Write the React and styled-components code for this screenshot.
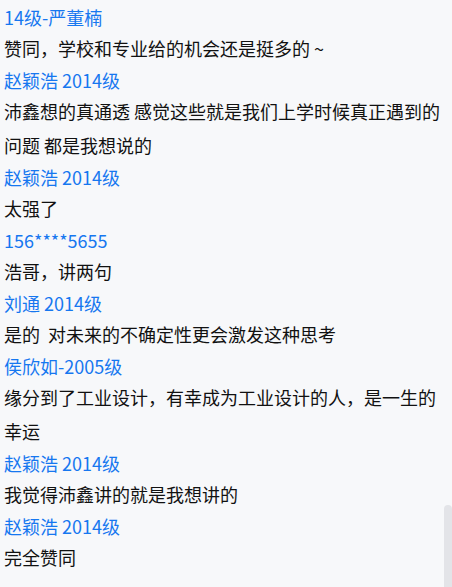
import React from 'react';
import styled, { createGlobalStyle } from 'styled-components';

const GlobalStyle = createGlobalStyle`
  html, body {
    margin: 0;
    padding: 0;
    background: #f7f8fa;
    overflow: hidden;
  }
`;

const Page = styled.div`
  position: relative;
  width: 452px;
  height: 587px;
  overflow: hidden;
  background: #f7f8fa;
  font-family: "Microsoft YaHei", "Noto Sans CJK SC", sans-serif;
`;

const List = styled.ul`
  list-style: none;
  margin: 0;
  padding: 3px 4px 0 4px;
`;

const Comment = styled.li`
  display: flex;
  flex-direction: column;
`;

const Author = styled.div`
  font-size: 18px;
  line-height: 28px;
  color: #1677f0;
`;

const Text = styled.div`
  font-size: 18px;
  line-height: 34px;
  color: #111;
  padding-bottom: 1px;
  white-space: pre-wrap;
`;

const ScrollThumb = styled.div`
  position: absolute;
  right: 0;
  top: 505px;
  width: 8px;
  height: 90px;
  border-radius: 4px 4px 0 0;
  background: #e3e4e8;
`;

const comments = [
  { author: '14级-严董楠', text: '赞同，学校和专业给的机会还是挺多的 ~' },
  { author: '赵颖浩 2014级', text: '沛鑫想的真通透 感觉这些就是我们上学时候真正遇到的问题 都是我想说的' },
  { author: '赵颖浩 2014级', text: '太强了' },
  { author: '156****5655', text: '浩哥，讲两句' },
  { author: '刘通 2014级', text: '是的  对未来的不确定性更会激发这种思考' },
  { author: '侯欣如-2005级', text: '缘分到了工业设计，有幸成为工业设计的人，是一生的幸运' },
  { author: '赵颖浩 2014级', text: '我觉得沛鑫讲的就是我想讲的' },
  { author: '赵颖浩 2014级', text: '完全赞同' },
];

export default function App() {
  return (
    <Page>
      <GlobalStyle />
      <List>
        {comments.map((c, i) => (
          <Comment key={i}>
            <Author>{c.author}</Author>
            <Text>{c.text}</Text>
          </Comment>
        ))}
      </List>
      <ScrollThumb />
    </Page>
  );
}
